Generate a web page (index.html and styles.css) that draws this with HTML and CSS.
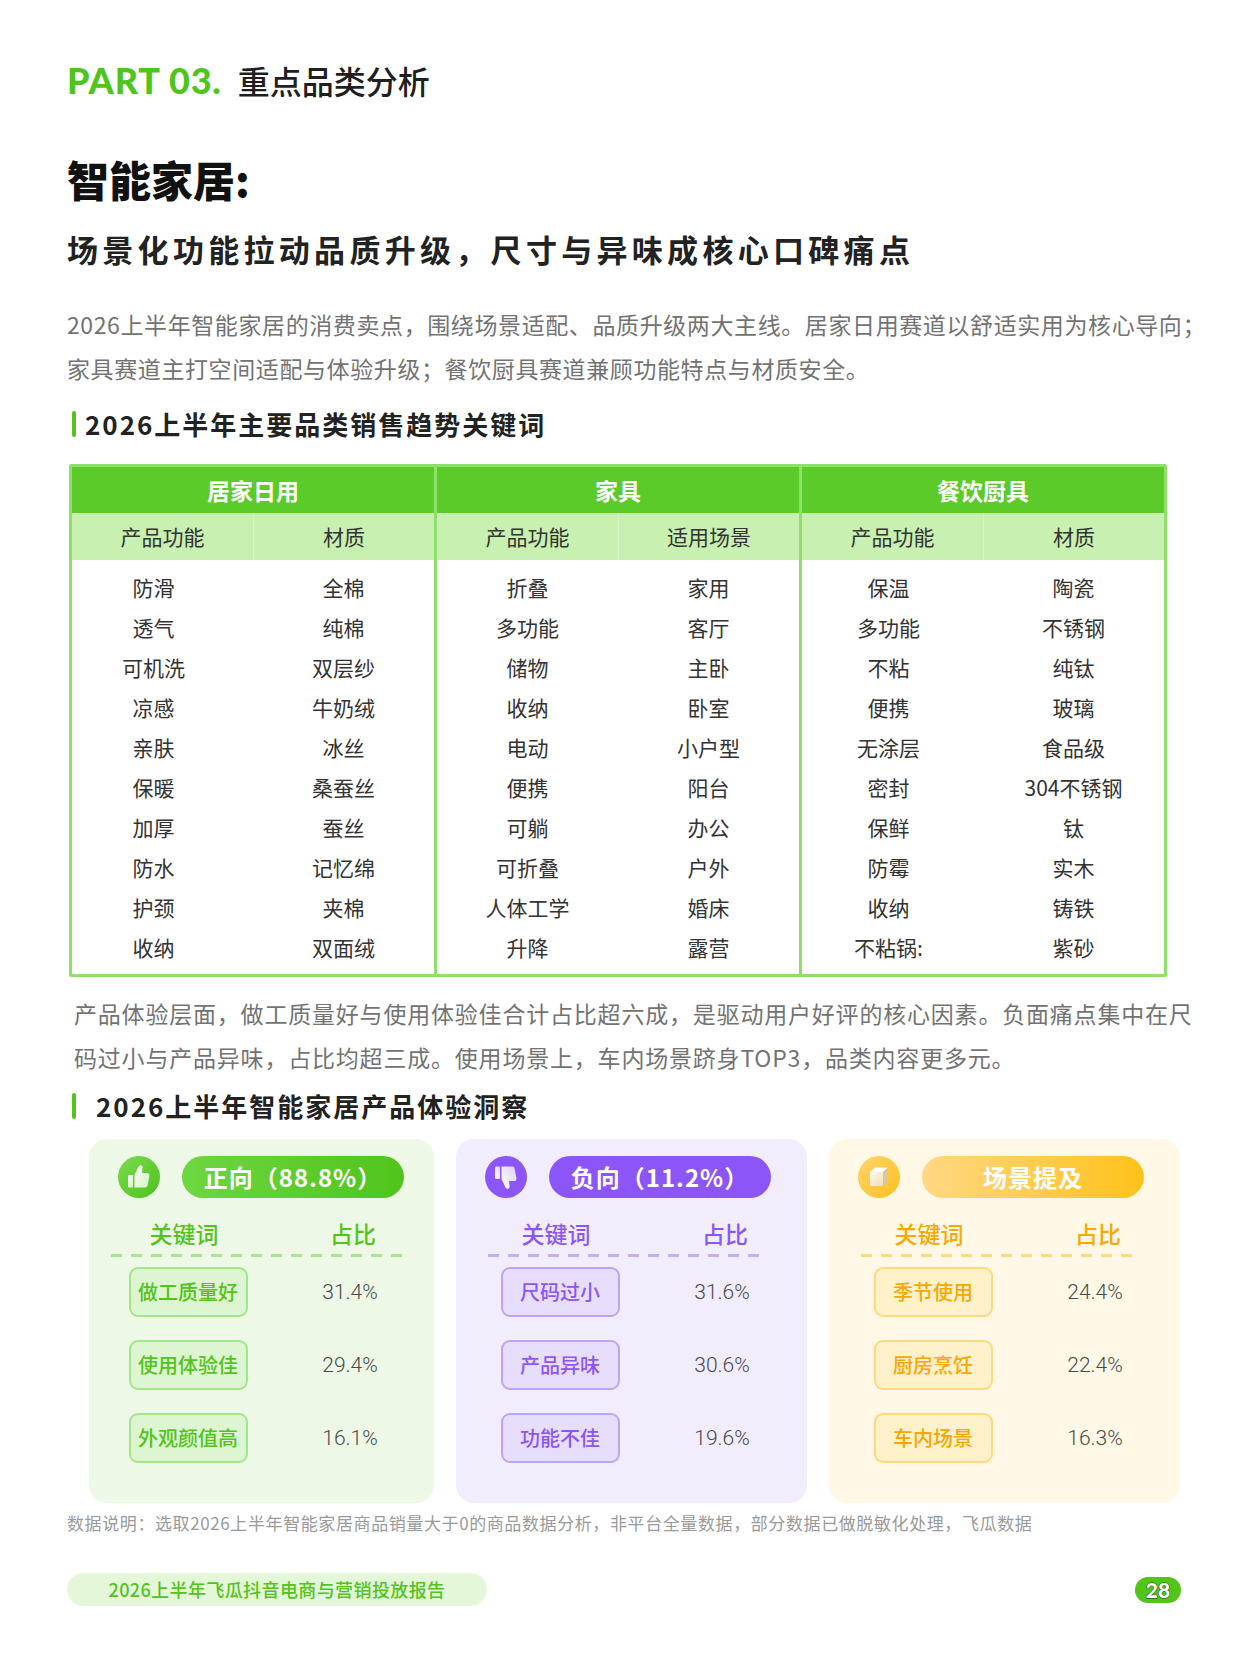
FILE: index.html
```html
<!DOCTYPE html>
<html lang="zh-CN">
<head>
<meta charset="utf-8">
<title>PART 03. 重点品类分析</title>
<link rel="stylesheet" href="styles.css">
</head>
<body>
<div class="page">
  <div class="part"><span class="part-en">PART 03.</span><span class="part-cn">重点品类分析</span></div>
  <h1 class="title">智能家居:</h1>
  <h2 class="subtitle">场景化功能拉动品质升级，尺寸与异味成核心口碑痛点</h2>
  <p class="para">
    <span class="line">2026上半年智能家居的消费卖点，围绕场景适配、品质升级两大主线。居家日用赛道以舒适实用为核心导向；</span>
    <span class="line">家具赛道主打空间适配与体验升级；餐饮厨具赛道兼顾功能特点与材质安全。</span>
  </p>
  <h3 class="sec-title"><span class="bar"></span>2026上半年主要品类销售趋势关键词</h3>

  <div class="kw-table">
    <div class="grp">
      <div class="grp-head">居家日用</div>
      <div class="sub-head"><div>产品功能</div><div>材质</div></div>
      <div class="grp-body">
        <div class="col col-shift"><div>防滑</div><div>透气</div><div>可机洗</div><div>凉感</div><div>亲肤</div><div>保暖</div><div>加厚</div><div>防水</div><div>护颈</div><div>收纳</div></div>
        <div class="col"><div>全棉</div><div>纯棉</div><div>双层纱</div><div>牛奶绒</div><div>冰丝</div><div>桑蚕丝</div><div>蚕丝</div><div>记忆绵</div><div>夹棉</div><div>双面绒</div></div>
      </div>
    </div>
    <div class="grp">
      <div class="grp-head">家具</div>
      <div class="sub-head"><div>产品功能</div><div>适用场景</div></div>
      <div class="grp-body">
        <div class="col"><div>折叠</div><div>多功能</div><div>储物</div><div>收纳</div><div>电动</div><div>便携</div><div>可躺</div><div>可折叠</div><div>人体工学</div><div>升降</div></div>
        <div class="col"><div>家用</div><div>客厅</div><div>主卧</div><div>卧室</div><div>小户型</div><div>阳台</div><div>办公</div><div>户外</div><div>婚床</div><div>露营</div></div>
      </div>
    </div>
    <div class="grp">
      <div class="grp-head">餐饮厨具</div>
      <div class="sub-head"><div>产品功能</div><div>材质</div></div>
      <div class="grp-body">
        <div class="col col-shift-s"><div>保温</div><div>多功能</div><div>不粘</div><div>便携</div><div>无涂层</div><div>密封</div><div>保鲜</div><div>防霉</div><div>收纳</div><div>不粘锅:</div></div>
        <div class="col"><div>陶瓷</div><div>不锈钢</div><div>纯钛</div><div>玻璃</div><div>食品级</div><div>304不锈钢</div><div>钛</div><div>实木</div><div>铸铁</div><div>紫砂</div></div>
      </div>
    </div>
  </div>

  <p class="para para2">
    <span class="line">产品体验层面，做工质量好与使用体验佳合计占比超六成，是驱动用户好评的核心因素。负面痛点集中在尺</span>
    <span class="line">码过小与产品异味，占比均超三成。使用场景上，车内场景跻身TOP3，品类内容更多元。</span>
  </p>
  <h3 class="sec-title sec-title2"><span class="bar"></span>2026上半年智能家居产品体验洞察</h3>

  <div class="cards">
    <div class="card card-pos">
      <div class="card-head">
        <div class="icon">
          <svg viewBox="0 0 42 42" width="42" height="42">
            <defs>
              <linearGradient id="gUp" x1="0" y1="0" x2="1" y2="1">
                <stop offset="0" stop-color="#7bdc4e"/><stop offset="1" stop-color="#4cc11a"/>
              </linearGradient>
              <linearGradient id="wUp" x1="0" y1="0" x2="1" y2="1">
                <stop offset="0" stop-color="#ffffff"/><stop offset="1" stop-color="#d2f2bf"/>
              </linearGradient>
            </defs>
            <circle cx="21" cy="21" r="21" fill="url(#gUp)"/>
            <rect x="10" y="19" width="5" height="12.5" rx="1.2" fill="url(#wUp)"/>
            <path d="M16.5 19 L20.5 10.5 C21.5 8.6 24.6 9 24.6 11.6 L24 17 H29 C30.7 17 31.8 18.4 31.4 20 L29.6 29.6 C29.3 30.9 28.3 31.5 27 31.5 H16.5 Z" fill="url(#wUp)"/>
          </svg>
        </div>
        <div class="pill">正向（88.8%）</div>
      </div>
      <div class="col-head"><span>关键词</span><span class="ch2">占比</span></div>
      <div class="dash"></div>
      <div class="rows">
        <div class="row"><span class="kw">做工质量好</span><span class="pct">31.4%</span></div>
        <div class="row"><span class="kw">使用体验佳</span><span class="pct">29.4%</span></div>
        <div class="row"><span class="kw">外观颜值高</span><span class="pct">16.1%</span></div>
      </div>
    </div>

    <div class="card card-neg">
      <div class="card-head">
        <div class="icon">
          <svg viewBox="0 0 42 42" width="42" height="42">
            <defs>
              <linearGradient id="wDown" x1="0" y1="0" x2="1" y2="1">
                <stop offset="0" stop-color="#ffffff"/><stop offset="1" stop-color="#ddd0fb"/>
              </linearGradient>
            </defs>
            <circle cx="21" cy="21" r="21" fill="#8c55f7"/>
            <g transform="matrix(1 0 0 -1 0 42)">
              <rect x="10" y="19" width="5" height="12.5" rx="1.2" fill="url(#wDown)"/>
              <path d="M16.5 19 L20.5 10.5 C21.5 8.6 24.6 9 24.6 11.6 L24 17 H29 C30.7 17 31.8 18.4 31.4 20 L29.6 29.6 C29.3 30.9 28.3 31.5 27 31.5 H16.5 Z" fill="url(#wDown)"/>
            </g>
          </svg>
        </div>
        <div class="pill">负向（11.2%）</div>
      </div>
      <div class="col-head"><span>关键词</span><span class="ch2">占比</span></div>
      <div class="dash"></div>
      <div class="rows">
        <div class="row"><span class="kw">尺码过小</span><span class="pct">31.6%</span></div>
        <div class="row"><span class="kw">产品异味</span><span class="pct">30.6%</span></div>
        <div class="row"><span class="kw">功能不佳</span><span class="pct">19.6%</span></div>
      </div>
    </div>

    <div class="card card-scene">
      <div class="card-head">
        <div class="icon">
          <svg viewBox="0 0 42 42" width="42" height="42">
            <defs>
              <linearGradient id="gBox" x1="0" y1="0" x2="1" y2="1">
                <stop offset="0" stop-color="#ffd56a"/><stop offset="1" stop-color="#ffbf1f"/>
              </linearGradient>
              <linearGradient id="fBox" x1="0" y1="0" x2="1" y2="1">
                <stop offset="0" stop-color="#fffaf0"/><stop offset="1" stop-color="#f1ddb0"/>
              </linearGradient>
            </defs>
            <circle cx="21" cy="21" r="21" fill="url(#gBox)"/>
            <polygon points="12,16 17,11.5 30,11.5 25,16" fill="#fffdf7"/>
            <polygon points="12,16 25,16 25,30 12,30" fill="url(#fBox)"/>
            <polygon points="25,16 30,11.5 30,25.5 25,30" fill="#d8c6a0"/>
          </svg>
        </div>
        <div class="pill">场景提及</div>
      </div>
      <div class="col-head"><span>关键词</span><span class="ch2">占比</span></div>
      <div class="dash"></div>
      <div class="rows">
        <div class="row"><span class="kw">季节使用</span><span class="pct">24.4%</span></div>
        <div class="row"><span class="kw">厨房烹饪</span><span class="pct">22.4%</span></div>
        <div class="row"><span class="kw">车内场景</span><span class="pct">16.3%</span></div>
      </div>
    </div>
  </div>

  <p class="note">数据说明：选取2026上半年智能家居商品销量大于0的商品数据分析，非平台全量数据，部分数据已做脱敏化处理，飞瓜数据</p>

  <div class="footer">
    <div class="footer-pill">2026上半年飞瓜抖音电商与营销投放报告</div>
    <div class="page-num">28</div>
  </div>
</div>
</body>
</html>
```

FILE: styles.css
```css
* { box-sizing: border-box; }

body {
  margin: 0;
  background: #ffffff;
  font-family: "Noto Sans CJK SC", "Noto Sans", sans-serif;
  color: #333333;
}

.page {
  width: 1249px;
  padding: 60px 68px 0 67px;
}

/* ---------- Heading block ---------- */
.part {
  display: flex;
  align-items: baseline;
  height: 40px;
  line-height: 40px;
}
.part-en {
  font-family: "Lato", "Inter", sans-serif;
  font-weight: 900;
  font-size: 36px;
  letter-spacing: 0.8px;
  color: #4ec51c;
}
.part-cn {
  margin-left: 16px;
  font-size: 32px;
  font-weight: 500;
  color: #1f1f1f;
}

.title {
  margin: 54px 0 0;
  font-size: 42px;
  line-height: 50px;
  font-weight: 900;
  color: #111111;
}

.subtitle {
  margin: 25px 0 0;
  font-size: 31px;
  line-height: 40px;
  font-weight: 700;
  letter-spacing: 4.3px;
  color: #222222;
}

.para {
  margin: 33px 0 0;
  font-size: 23px;
  line-height: 44px;
  letter-spacing: 0.6px;
  color: #737373;
}
.para .line {
  display: block;
  white-space: nowrap;
}
.para2 {
  margin-top: 14px;
  margin-left: 7px;
  letter-spacing: 0.8px;
}

.sec-title {
  display: flex;
  align-items: center;
  margin: 17px 0 0;
  font-size: 26px;
  line-height: 34px;
  font-weight: 700;
  letter-spacing: 2px;
  color: #222222;
}
.sec-title .bar {
  width: 4px;
  height: 26px;
  margin: 0 9px 0 5px;
  border-radius: 2px;
  background: #52c41a;
}
.sec-title2 {
  margin-top: 10px;
}
.sec-title2 .bar {
  margin-right: 20px;
}

/* ---------- Keyword table ---------- */
.kw-table {
  display: flex;
  width: 1098px;
  margin: 23px 0 0 2px;
  border: 3px solid #8ee06b;
  border-radius: 2px;
}
.grp {
  flex: 1;
  display: flex;
  flex-direction: column;
}
.grp + .grp {
  border-left: 3px solid #8ee06b;
}
.grp-head {
  height: 46px;
  line-height: 46px;
  text-align: center;
  background: #5bcb29;
  color: #ffffff;
  font-size: 23px;
  font-weight: 700;
}
.sub-head {
  display: grid;
  grid-template-columns: 1fr 1fr;
  height: 47px;
  background: #c7f0b1;
}
.sub-head div {
  line-height: 47px;
  text-align: center;
  font-size: 21px;
  color: #333333;
}
.sub-head div + div {
  border-left: 1px solid #d8f4c8;
}
.grp-body {
  display: grid;
  grid-template-columns: 1fr 1fr;
  padding: 7px 0;
}
.col div {
  height: 40px;
  line-height: 40px;
  text-align: center;
  font-size: 21px;
  color: #333333;
}
.col-shift div { padding-right: 18px; }
.col-shift-s div { padding-right: 8px; }

/* ---------- Cards ---------- */
.cards {
  display: flex;
  gap: 22px;
  margin: 16px 0 0 22px;
}
.card {
  width: 351px;
  height: 364px;
  padding: 17px 0 0 0;
  border-radius: 18px;
}
.card-pos { width: 345px; }
.card-head {
  display: flex;
  align-items: center;
  padding-left: 29px;
  gap: 22px;
}
.icon {
  width: 42px;
  height: 42px;
}
.icon svg { display: block; }
.pill {
  width: 222px;
  height: 42px;
  line-height: 42px;
  border-radius: 21px;
  text-align: center;
  color: #ffffff;
  font-size: 24px;
  font-weight: 700;
  letter-spacing: 1px;
}
.col-head {
  display: grid;
  grid-template-columns: 162px 162px;
  margin: 20px 0 0 14px;
  line-height: 30px;
  font-size: 23px;
  font-weight: 500;
}
.col-head span { text-align: center; }
.col-head .ch2 { padding-left: 14px; }
.dash {
  height: 3px;
  margin: 6px 30px 0 22px;
}
.rows {
  display: flex;
  flex-direction: column;
  gap: 23px;
  margin: 10px 0 0 18px;
}
.row {
  display: grid;
  grid-template-columns: 162px 162px;
  align-items: center;
}
.kw {
  justify-self: center;
  width: 119px;
  height: 50px;
  line-height: 46px;
  border-radius: 9px;
  border: 2px solid;
  text-align: center;
  font-size: 20px;
  font-weight: 500;
}
.pct {
  text-align: center;
  font-family: "Roboto", "Liberation Sans", sans-serif;
  font-weight: 300;
  font-size: 21px;
  color: #4a4a4a;
}

/* purple & yellow cards sit their columns a little further right */
.card-neg .col-head,
.card-scene .col-head { margin-left: 19px; }
.card-neg .rows,
.card-scene .rows { margin-left: 23px; }
.card-neg .dash,
.card-scene .dash { margin: 6px 40px 0 32px; }

.card-pos { background: #edf8e6; }
.card-pos .pill { background: linear-gradient(90deg, #6ed641, #50c41b); }
.card-pos .col-head { color: #52c41a; }
.card-pos .dash { background: repeating-linear-gradient(90deg, #a6e68c 0 11px, transparent 11px 20px); }
.card-pos .kw { background: #ddf5d0; border-color: #a3e68a; color: #52c41a; }

.card-neg { background: #f1edfd; }
.card-neg .pill { background: #8c55f7; }
.card-neg .col-head { color: #8c55f7; }
.card-neg .dash { background: repeating-linear-gradient(90deg, #c6adf8 0 11px, transparent 11px 20px); }
.card-neg .kw { background: #e7defd; border-color: #bea4f7; color: #8c55f7; }

.card-scene { background: #fff8e6; }
.card-scene .pill { background: linear-gradient(90deg, #ffd784, #ffc21a); }
.card-scene .col-head { color: #f8a800; }
.card-scene .dash { background: repeating-linear-gradient(90deg, #ffdb78 0 11px, transparent 11px 20px); }
.card-scene .kw { background: #fff1c9; border-color: #ffd880; color: #f8a700; }

/* ---------- Note & footer ---------- */
.note {
  margin: 8px 0 0;
  font-size: 17px;
  line-height: 24px;
  letter-spacing: 0.6px;
  color: #9a9a9a;
  white-space: nowrap;
}

.footer {
  display: flex;
  justify-content: space-between;
  align-items: center;
  margin-top: 38px;
  height: 33px;
}
.footer-pill {
  width: 420px;
  height: 33px;
  line-height: 33px;
  border-radius: 17px;
  background: #e4f7d9;
  text-align: center;
  font-size: 18px;
  font-weight: 500;
  letter-spacing: 0.4px;
  color: #52c41a;
}
.page-num {
  width: 46px;
  height: 26px;
  line-height: 26px;
  border-radius: 13px;
  background: #52c41a;
  text-align: center;
  font-family: "Lato", "Liberation Sans", sans-serif;
  font-weight: 900;
  font-size: 21px;
  color: #ffffff;
  -webkit-text-stroke: 1px #1d3b10;
  paint-order: stroke fill;
}
```
